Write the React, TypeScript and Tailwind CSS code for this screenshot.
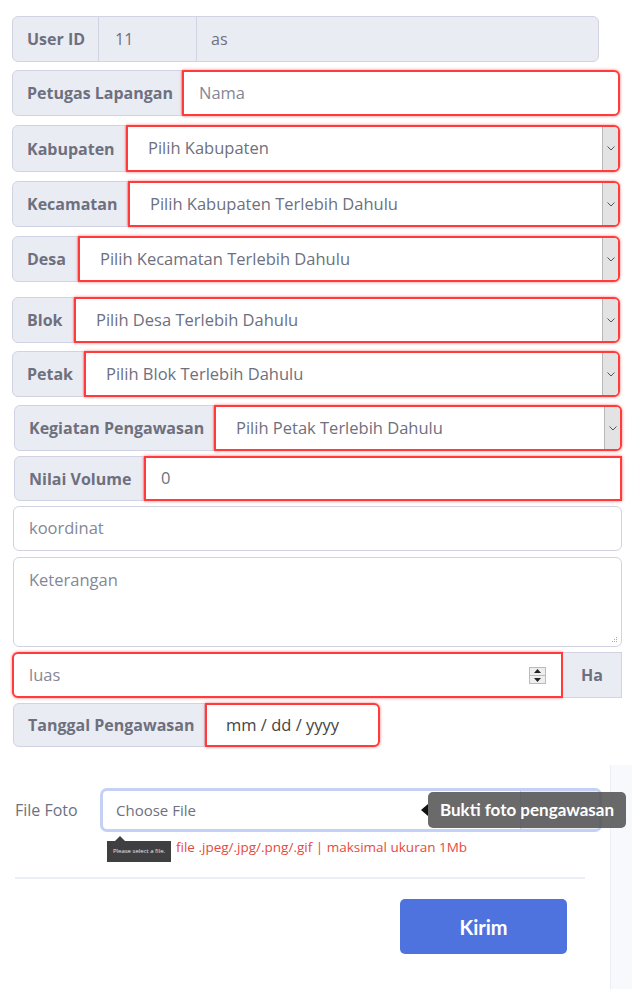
import React from 'react';

const red = 'border-2 border-[#ff3b3b] shadow-[0_0_3px_rgba(255,0,0,0.55)]';

const Label = ({ text, w, className = '' }: { text: string; w: string; className?: string }) => (
  <div
    className={`${w} shrink-0 flex items-center pl-[14px] bg-[#eaecf4] border border-[#d1d3e2] rounded-l-[6px] text-[16px] font-bold text-[#6e707e] ${className}`}
  >
    {text}
  </div>
);

const SelectBox = ({ text, pl = 'pl-[20px]' }: { text: string; pl?: string }) => (
  <div className={`flex-1 flex items-center bg-white rounded-r-[6px] ${red}`}>
    <span className={`flex-1 ${pl} text-[16.5px] text-[#6e707e]`}>{text}</span>
    <div className="w-[16px] self-stretch bg-[#e3e3e3] border-l border-[#b8b8b8] rounded-r-[4px] flex items-center justify-center">
      <svg width="8" height="5" viewBox="0 0 8 5">
        <path d="M0.5 0.5 L4 4 L7.5 0.5" fill="none" stroke="#555" strokeWidth="1" />
      </svg>
    </div>
  </div>
);

const App = () => {
  return (
    <div className="w-[632px] h-[989px] bg-white overflow-hidden" style={{ fontFamily: '"Open Sans", "Noto Sans", sans-serif' }}>
      <div className="pt-[16px]">
        {/* User ID */}
        <div className="ml-[12px] w-[587px] h-[46px] flex bg-[#eaecf4] border border-[#d1d3e2] rounded-[6px] text-[16px] text-[#6e707e]">
          <div className="w-[86px] flex items-center pl-[14px] font-bold border-r border-[#d1d3e2]">User ID</div>
          <div className="w-[98px] flex items-center pl-[16px] border-r border-[#d1d3e2]">11</div>
          <div className="flex-1 flex items-center pl-[14px]">as</div>
        </div>

        {/* Petugas */}
        <div className="mt-[8px] ml-[12px] w-[608px] h-[46px] flex">
          <Label text="Petugas Lapangan" w="w-[170px]" />
          <div className={`flex-1 flex items-center pl-[15px] bg-white rounded-r-[6px] text-[16.5px] text-[#858796] ${red}`}>Nama</div>
        </div>

        <div className="mt-[9px] ml-[12px] w-[608px] h-[47px] flex">
          <Label text="Kabupaten" w="w-[114px]" />
          <SelectBox text="Pilih Kabupaten" />
        </div>

        <div className="mt-[9px] ml-[12px] w-[608px] h-[46px] flex">
          <Label text="Kecamatan" w="w-[116px]" />
          <SelectBox text="Pilih Kabupaten Terlebih Dahulu" />
        </div>

        <div className="mt-[9px] ml-[12px] w-[608px] h-[46px] flex">
          <Label text="Desa" w="w-[66px]" />
          <SelectBox text="Pilih Kecamatan Terlebih Dahulu" />
        </div>

        <div className="mt-[15px] ml-[12px] w-[608px] h-[46px] flex">
          <Label text="Blok" w="w-[62px]" />
          <SelectBox text="Pilih Desa Terlebih Dahulu" />
        </div>

        <div className="mt-[8px] ml-[12px] w-[608px] h-[46px] flex">
          <Label text="Petak" w="w-[72px]" />
          <SelectBox text="Pilih Blok Terlebih Dahulu" />
        </div>

        <div className="mt-[8px] ml-[14px] w-[608px] h-[46px] flex">
          <Label text="Kegiatan Pengawasan" w="w-[200px]" />
          <SelectBox text="Pilih Petak Terlebih Dahulu" />
        </div>

        <div className="mt-[5px] ml-[14px] w-[608px] h-[45px] flex">
          <Label text="Nilai Volume" w="w-[130px]" />
          <div className={`flex-1 flex items-center pl-[15px] bg-white text-[16.5px] text-[#6e707e] ${red}`}>0</div>
        </div>

        {/* koordinat */}
        <div className="mt-[5px] ml-[13px] w-[609px] h-[45px] flex items-center pl-[15px] bg-white border border-[#d1d3e2] rounded-[6px] text-[16.5px] text-[#858796]">
          koordinat
        </div>

        {/* keterangan */}
        <div className="mt-[6px] ml-[13px] w-[609px] h-[90px] relative pl-[15px] pt-[10px] bg-white border border-[#d1d3e2] rounded-[6px] text-[16.5px] text-[#858796]">
          Keterangan
          <svg className="absolute right-[3px] bottom-[3px]" width="7" height="7" viewBox="0 0 7 7">
            <rect x="5" y="1" width="1" height="1" fill="#aaa" />
            <rect x="3" y="3" width="1" height="1" fill="#aaa" />
            <rect x="5" y="3" width="1" height="1" fill="#aaa" />
            <rect x="1" y="5" width="1" height="1" fill="#aaa" />
            <rect x="3" y="5" width="1" height="1" fill="#aaa" />
            <rect x="5" y="5" width="1" height="1" fill="#aaa" />
          </svg>
        </div>

        {/* luas */}
        <div className="mt-[5px] ml-[12px] w-[610px] h-[46px] flex">
          <div className={`w-[551px] flex items-center pl-[15px] pr-[15px] bg-white rounded-l-[6px] text-[16.5px] text-[#858796] ${red}`}>
            <span className="flex-1">luas</span>
            <div className="w-[17px] h-[17px] border border-[#bbb] bg-[#eee] flex flex-col items-center justify-center gap-[2px]">
              <svg width="7" height="4" viewBox="0 0 7 4"><path d="M0 4 L3.5 0 L7 4 Z" fill="#222" /></svg>
              <div className="w-[15px] h-px bg-[#bbb]" />
              <svg width="7" height="4" viewBox="0 0 7 4"><path d="M0 0 L3.5 4 L7 0 Z" fill="#222" /></svg>
            </div>
          </div>
          <div className="flex-1 flex items-center justify-center bg-[#eaecf4] border border-[#d1d3e2] border-l-0 text-[16px] font-bold text-[#6e707e]">Ha</div>
        </div>

        {/* tanggal */}
        <div className="mt-[5px] ml-[13px] h-[44px] flex">
          <Label text="Tanggal Pengawasan" w="w-[192px]" />
          <div className={`w-[175px] flex items-center pl-[19px] bg-white rounded-r-[6px] text-[16.5px] text-[#444] ${red}`}>mm / dd / yyyy</div>
        </div>
      </div>

      {/* bottom section */}
      <div className="mt-[18px] flex h-[224px]">
        <div className="w-[610px] relative">
          <div className="mt-[23px] flex items-center">
            <div className="w-[100px] pl-[15px] text-[16px] text-[#6e707e]">File Foto</div>
            <div className="w-[502px] h-[44px] rounded-[7px] border-[3px] border-[#c4d0f5] bg-white flex">
              <div className="flex-1 flex items-center pl-[13px] text-[15px] text-[#6e707e]">Choose File</div>
              <div className="w-[79px] border-l border-[#c8ccd8] bg-[#eaecf4] rounded-r-[4px]" />
            </div>
          </div>

          {/* validation tooltip */}
          <div className="absolute left-[107px] top-[71px]">
            <div className="ml-[8px] w-0 h-0 border-l-[5px] border-r-[5px] border-b-[5px] border-l-transparent border-r-transparent border-b-[#3f3f42]" />
            <div className="w-[64px] h-[21px] bg-[#3f3f42] flex items-center justify-center text-[6px] text-[#e8e8e8]">Please select a file.</div>
          </div>

          <div className="mt-[5px] ml-[176px] text-[13.5px] text-[#e74a3b]">file .jpeg/.jpg/.png/.gif | maksimal ukuran 1Mb</div>

          <div className="mt-[20px] ml-[15px] w-[570px] h-[2px] bg-[#eceef5]" />

          <div className="mt-[20px] ml-[400px] w-[167px] h-[55px] rounded-[5px] bg-[#4e73df] flex items-center justify-center text-[20px] font-bold text-white" style={{ fontFamily: 'Lato, "Open Sans", sans-serif' }}>
            Kirim
          </div>

          {/* info tooltip */}
          <div className="absolute left-[421px] top-[27px] flex items-center z-10">
            <div className="w-0 h-0 border-t-[6px] border-b-[6px] border-r-[7px] border-t-transparent border-b-transparent border-r-[#111]" />
            <div className="w-[198px] h-[36px] rounded-[5px] bg-[rgba(80,80,80,0.85)] flex items-center justify-center text-[17px] font-bold text-white" style={{ fontFamily: 'Lato, "Open Sans", sans-serif' }}>
              Bukti foto pengawasan
            </div>
          </div>
        </div>
        <div className="flex-1 bg-[#f8f9fc] border-l border-[#eceef4]" />
      </div>
    </div>
  );
};

export default App;
